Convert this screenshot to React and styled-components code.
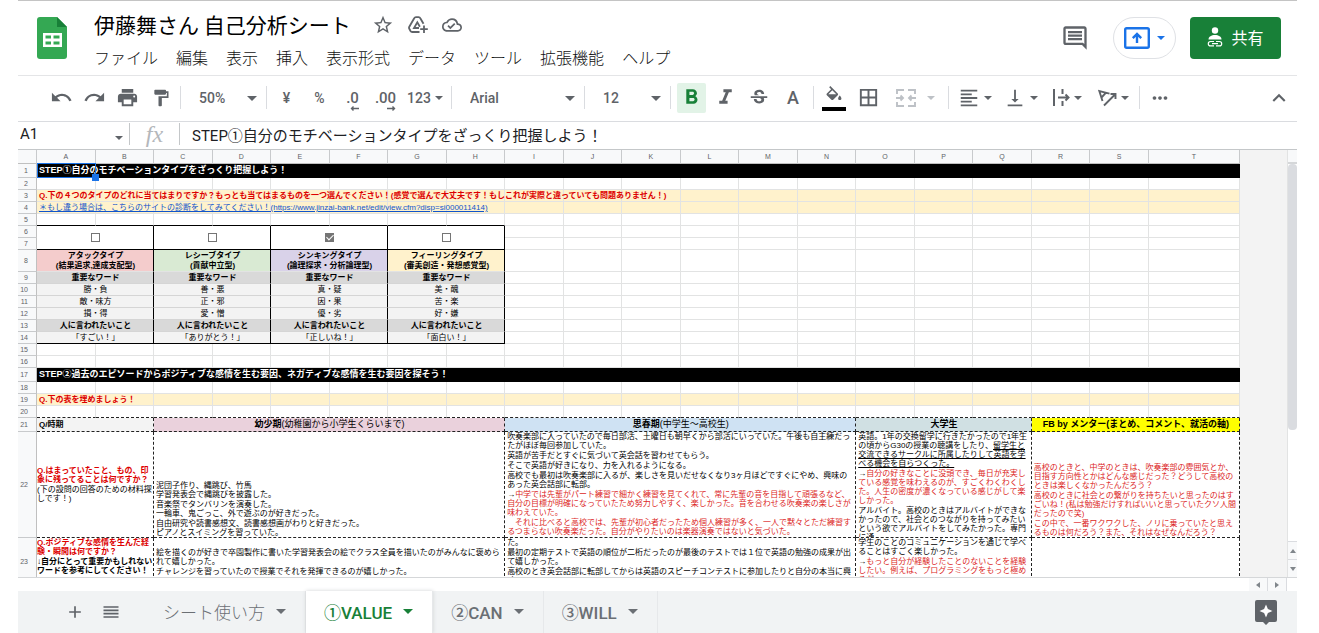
import { useState } from 'react';
import styled, { createGlobalStyle, css } from 'styled-components';
import {
    MdStarBorder,
    MdOutlineCloudDone,
    MdOutlineComment,
    MdUndo,
    MdRedo,
    MdPrint,
    MdFormatPaint,
    MdFormatBold,
    MdFormatItalic,
    MdStrikethroughS,
    MdBorderAll,
    MdFormatAlignLeft,
    MdVerticalAlignBottom,
    MdMoreHoriz,
    MdKeyboardArrowUp,
    MdAdd,
    MdReorder,
} from 'react-icons/md';

const GlobalStyle = createGlobalStyle`
    * {
        box-sizing: border-box;
    }

    body {
        margin: 0;
        background: white;
        color: #202124;
        font-family: Roboto, "Noto Sans CJK JP", sans-serif;
    }

    button, input, select {
        margin: 0;
        padding: 0;
        border: none;
        background: none;
        color: inherit;
        font: inherit;
    }

    p {
        margin: 0;
    }
`;

const Page = styled.main`
    height: 100vh;
    margin: 0 22px 0 18px;
    border-top: 1px solid #c4c4c4;
    display: flex;
    flex-direction: column;
    overflow: hidden;
`;

/* ---------- header ---------- */

const Header = styled.header`
    height: 75px;
    padding: 0 16px 0 19px;
    border-bottom: 1px solid #e4e5e7;
    display: flex;
    flex-shrink: 0;
`;

const Logo = styled.svg`
    width: 30px;
    height: 42px;
    margin-top: 16px;
`;

const TitleArea = styled.div`
    margin-left: 27px;
    padding-top: 8px;
    flex: 1;
`;

const TitleRow = styled.div`
    height: 32px;
    display: flex;
    align-items: center;
    gap: 14px;
    color: #5f6368;
`;

const DocTitle = styled.h1`
    margin: 0 7px 0 0;
    padding-bottom: 2px;
    color: #000;
    font-family: "Noto Sans CJK JP", sans-serif;
    font-size: 21px;
    font-weight: 400;
    line-height: 30px;
    white-space: nowrap;
`;

const IconButton = styled.button`
    display: flex;
    align-items: center;
    justify-content: center;
    color: #5f6368;
`;

const Menu = styled.nav`
    display: flex;
    gap: 18px;
    height: 32px;
`;

const MenuItem = styled.button`
    color: #111;
    font-family: "Noto Sans CJK JP", sans-serif;
    font-size: 16px;
    font-weight: 300;
    line-height: 32px;
    white-space: nowrap;
`;

const HeaderActions = styled.div`
    height: 42px;
    margin-top: 16px;
    display: flex;
    align-items: center;
`;

const PresentButton = styled.button`
    width: 63px;
    height: 42px;
    margin: 0 14px 0 24px;
    border: 1px solid #dfe1e5;
    border-radius: 21px;
    display: flex;
    align-items: center;
    justify-content: center;
    gap: 7px;
    color: #1a73e8;
`;

const ShareButton = styled.button`
    width: 91px;
    height: 42px;
    padding-bottom: 3px;
    border-radius: 4px;
    background: #188038;
    display: flex;
    align-items: center;
    justify-content: center;
    gap: 8px;
    color: white;
    font-size: 16px;
`;

/* ---------- toolbar ---------- */

const Toolbar = styled.div`
    height: 46px;
    padding: 0 2px 2px 27px;
    border-bottom: 1px solid #dadce0;
    display: flex;
    align-items: center;
    flex-shrink: 0;
    color: #5f6368;
    font-size: 14px;
`;

const Tool = styled.button`
    width: ${(props) => (props.$wide ? '46px' : '33px')};
    height: 30px;
    display: flex;
    align-items: center;
    justify-content: center;
    gap: 4px;
    color: ${(props) => (props.$muted ? '#bdc1c6' : '#5f6368')};
    font-weight: 500;
`;

const FormatTool = styled(Tool)`
    width: 34px;
    font-size: 18px;

    span {
        width: 29px;
        height: 30px;
        border-radius: 2px;
        display: flex;
        align-items: center;
        justify-content: center;
    }

    ${(props) =>
        props.$on &&
        css`
            color: #188038;

            span {
                background: #e2f3e7;
            }
        `}
`;

const MergeTool = styled(Tool)`
    width: 60px;
    gap: 11px;
`;

const CollapseTool = styled(Tool)`
    margin-left: auto;
`;

const Separator = styled.div`
    width: 1px;
    height: 23px;
    margin: 0 3px;
    background: #dadce0;
`;

const Picker = styled.label`
    position: relative;
    width: ${(props) => (props.$long ? '126px' : '79px')};
    height: 30px;

    select {
        appearance: none;
        width: 100%;
        height: 30px;
        padding-left: 15px;
        font-weight: 500;
    }

    svg {
        position: absolute;
        right: 6px;
        top: 13px;
        pointer-events: none;
    }
`;

const DecimalLabel = styled.span`
    display: flex;
    flex-direction: column;
    align-items: flex-end;
    padding-top: 6px;
    font-size: 15px;
    line-height: 15px;
`;

/* ---------- formula bar ---------- */

const FormulaBar = styled.div`
    height: 28px;
    padding-bottom: 3px;
    border-bottom: 1px solid #c4c7c9;
    display: flex;
    align-items: center;
    flex-shrink: 0;
`;

const NameBox = styled.input`
    width: 90px;
    padding-left: 2px;
    font-size: 15px;
`;

const NameCaret = styled.button`
    width: 21px;
    height: 24px;
    color: #5f6368;
`;

const Fx = styled.span`
    width: 49px;
    color: #b4b7bb;
    font-family: "Liberation Serif", serif;
    font-size: 24px;
    font-style: italic;
    line-height: 24px;
    text-align: center;
`;

const FormulaDivider = styled.div`
    width: 1px;
    height: 22px;
    background: #c4c7c9;
`;

const FormulaInput = styled.input`
    flex: 1;
    min-width: 0;
    height: 24px;
    padding-left: 12px;
    font-size: 15px;
`;

/* ---------- sheet ---------- */

const SheetArea = styled.div`
    flex: 1;
    min-height: 0;
    display: flex;
    border-bottom: 1px solid #d5d7d9;
    background: #f3f3f3;
`;

const GridView = styled.div`
    flex: 1;
    min-width: 0;
    margin-right: 47px;
    overflow: hidden;
`;

const Grid = styled.table`
    width: 100%;
    table-layout: fixed;
    border-collapse: separate;
    border-spacing: 0;
    background: white;
    color: #000;
    font-family: "Liberation Sans", "Noto Sans CJK JP", sans-serif;
    font-size: 8px;
    line-height: 9px;
`;

const HeadCol = styled.col`
    width: 19px;
`;

const LastCol = styled.col`
    width: 91px;
`;

const Row = styled.tr`
    height: ${(props) => props.$height || 12}px;
`;

const ColumnHead = styled.th`
    height: 14px;
    padding: 0;
    border-right: 1px solid #c8cacc;
    border-bottom: 1px solid #c0c0c0;
    background: #f8f9fa;
    color: #5f6368;
    font-size: 7px;
    font-weight: 400;
`;

const RowHead = styled.th`
    padding: 0 8px 0 0;
    border-right: 1px solid #c0c0c0;
    border-bottom: 1px solid #c8cacc;
    background: #f8f9fa;
    color: #5f6368;
    font-size: 7px;
    font-weight: 400;
    line-height: 8px;
    text-align: right;
`;

const Cell = styled.td`
    position: ${(props) => (props.$selected ? 'relative' : 'static')};
    padding: ${(props) => (props.$snug ? '0' : '0 1px 0 2px')};
    border-right: 1px ${(props) => props.$right || 'solid #e2e3e3'};
    border-bottom: 1px ${(props) => props.$bottom || 'solid #e2e3e3'};
    background: ${(props) => props.$fill || 'white'};
    color: ${(props) => props.$color || '#000'};
    font-size: ${(props) => (props.$large ? '9px' : '8px')};
    font-weight: ${(props) => (props.$bold ? 700 : 400)};
    text-align: ${(props) => (props.$center ? 'center' : 'left')};
    vertical-align: ${(props) => props.$valign || 'middle'};
    white-space: ${(props) => (props.$wrap ? 'normal' : 'nowrap')};
`;

const SelectionBox = styled.div`
    position: absolute;
    inset: -1px -1px -1px 0;
    border: 1px solid #1a73e8;

    &::after {
        content: "";
        position: absolute;
        right: -4px;
        bottom: -4px;
        width: 7px;
        height: 7px;
        background: #1a73e8;
    }
`;

const CellLink = styled.a`
    color: #1155cc;
`;

const TypeName = styled.div`
    line-height: 10px;
`;

const CheckInput = styled.input`
    appearance: none;
    width: 9px;
    height: 9px;
    border: 1px solid #757575;
    display: inline-grid;
    place-content: center;
    vertical-align: middle;

    &:checked {
        background: #757575;
    }

    &:checked::before {
        content: "";
        width: 3px;
        height: 6px;
        margin-bottom: 2px;
        border: solid white;
        border-width: 0 1px 1px 0;
        transform: rotate(45deg);
    }
`;

const Note = styled.div`
    max-height: 105px;
    overflow: hidden;

    p + p {
        margin-top: 1px;
    }
`;

const Red = styled.span`
    color: ${(props) => (props.$bold ? '#dd0000' : '#dc1f26')};
    font-weight: ${(props) => (props.$bold ? 700 : 400)};
`;

/* ---------- scrollbars ---------- */

const VerticalBar = styled.div`
    width: 10px;
    border-left: 1px solid #e2e3e3;
    background: white;
    display: flex;
    flex-direction: column;
`;

const BarCorner = styled.div`
    height: 14px;
    border-bottom: 2px solid #d5d7d9;
    background: #f8f9fa;
`;

const Thumb = styled.div`
    height: 266px;
    border-radius: 4px;
    background: #dadce0;
`;

const ArrowStack = styled.div`
    margin-top: auto;
    display: flex;
    flex-direction: column;
`;

const ArrowButton = styled.button`
    min-width: 9px;
    height: 18px;
    border-top: 1px solid #dadce0;
    background: #f8f9fa;
    display: flex;
    align-items: center;
    justify-content: center;
`;

const HorizontalBar = styled.div`
    height: 13px;
    padding-right: 10px;
    background: white;
    display: flex;
    justify-content: flex-end;
    flex-shrink: 0;

    button {
        width: 19px;
        height: 13px;
        border-top: none;
        border-right: 1px solid #dadce0;
    }
`;

/* ---------- sheet tabs ---------- */

const TabBar = styled.footer`
    height: 42px;
    padding: 0 20px 0 42px;
    background: #f1f3f4;
    display: flex;
    align-items: center;
    flex-shrink: 0;
`;

const TabTool = styled(IconButton)`
    width: 30px;
    margin-right: 6px;
`;

const Tabs = styled.div`
    margin-left: 13px;
    display: flex;
`;

const Tab = styled.button`
    height: 42px;
    padding: 0 19px 2px 18px;
    border-right: 1px solid #e6e8ea;
    background: ${(props) => (props.$active ? 'white' : 'transparent')};
    box-shadow: ${(props) => (props.$active ? '0 0 4px #d0d3d6' : 'none')};
    color: ${(props) => (props.$active ? '#188038' : '#6b6f74')};
    display: flex;
    align-items: center;
    gap: 11px;
    font-size: 17px;
    font-weight: ${(props) => (props.$light ? 300 : 500)};
    white-space: nowrap;
`;

const Explore = styled(IconButton)`
    margin-left: auto;
`;

const Caret = ({ size = 10 }) => (
    <svg width={size} height={size / 2} viewBox="0 0 10 5" aria-hidden="true">
        <path d="M0 0h10L5 5z" fill="currentColor" />
    </svg>
);

const Arrow = ({ turn }) => (
    <svg width="6" height="6" viewBox="0 0 6 6" aria-hidden="true">
        <path d="M0 5h6L3 1z" fill="#80868b" transform={`rotate(${turn} 3 3)`} />
    </svg>
);

const SheetsLogo = () => (
    <Logo viewBox="0 0 30 42" aria-hidden="true">
        <path d="M3 0h17l10 10v29a3 3 0 0 1-3 3H3a3 3 0 0 1-3-3V3a3 3 0 0 1 3-3z" fill="#34a853" />
        <path d="M20 0l10 10H20z" fill="#188038" />
        <path
            d="M6 16h19v14H6zM8.500 18.500v3h5.500v-3zM16.500 18.500v3h6v-3zM8.500 24.500v3h5.500v-3zM16.500 24.500v3h6v-3z"
            fill="white"
            fillRule="evenodd"
        />
    </Logo>
);

const DriveIcon = () => (
    <svg width="20" height="18" viewBox="0 0 20 18" aria-hidden="true">
        <path
            d="M11.500 16H4.200a2 2 0 0 1-1.700-1L1.300 12.800a2 2 0 0 1 0-2L6.200 2.200A2 2 0 0 1 8 1.100h2.600a2 2 0 0 1 1.700 1.100l3.200 5.600M11 12H6l3.300-5.700 2.600 4.500"
            fill="none"
            stroke="currentColor"
            strokeWidth="1.800"
        />
        <path d="M16 9.500v7.500M12.200 13.200h7.600" stroke="currentColor" strokeWidth="1.800" />
    </svg>
);

const PresentIcon = () => (
    <svg width="26" height="22" viewBox="0 0 26 22" aria-hidden="true">
        <rect x="1.200" y="1.200" width="23.600" height="19.600" rx="1.500" fill="none" stroke="currentColor" strokeWidth="2.400" />
        <path d="M13 16V7.500M8.800 11.200L13 7l4.200 4.200" fill="none" stroke="currentColor" strokeWidth="2.400" />
    </svg>
);

const DecimalArrow = ({ back }) => (
    <svg width="9" height="5" viewBox="0 0 9 5" aria-hidden="true">
        <path
            d={back ? 'M9 2.500H1.500M3.500 .5l-2 2 2 2' : 'M0 2.500h7.500M5.500 .5l2 2-2 2'}
            fill="none"
            stroke="currentColor"
            strokeWidth="1.400"
        />
    </svg>
);

const FillIcon = () => (
    <svg width="24" height="26" viewBox="0 0 24 26" aria-hidden="true">
        <g transform="translate(2 1) scale(.83)">
            <path
                d="M16.560 8.940L7.620 0 6.210 1.410l2.380 2.380-5.150 5.150c-.59.59-.59 1.540 0 2.120l5.500 5.500c.29.29.68.44 1.060.44s.77-.15 1.060-.44l5.500-5.500c.59-.58.59-1.530 0-2.120zM5.210 10L10 5.210 14.790 10H5.210zM19 11.500s-2 2.170-2 3.500c0 1.100.9 2 2 2s2-.9 2-2c0-1.330-2-3.500-2-3.500z"
                fill="currentColor"
            />
        </g>
        <path d="M0 22h24v4H0z" fill="#000" />
    </svg>
);

const MergeIcon = () => (
    <svg width="20" height="18" viewBox="0 0 20 18" aria-hidden="true">
        <path
            d="M1 5V1h7M12 1h7v4M1 13v4h7M12 17h7v-4M0 9h7M20 9h-7M4.500 6.500L7 9l-2.500 2.500M15.500 6.500L13 9l2.500 2.500"
            fill="none"
            stroke="currentColor"
            strokeWidth="1.900"
        />
    </svg>
);

const OverflowIcon = () => (
    <svg width="17" height="17" viewBox="0 0 17 17" aria-hidden="true">
        <path
            d="M1 0v17M9.500 0v5M9.500 12v5M5 8.500h10M12.500 5.500l3 3-3 3"
            fill="none"
            stroke="currentColor"
            strokeWidth="2"
        />
    </svg>
);

const RotateIcon = () => (
    <svg width="19" height="18" viewBox="0 0 19 18" aria-hidden="true">
        <path d="M6 16.500L17 5.500M12.500 5h5v5" fill="none" stroke="currentColor" strokeWidth="1.900" />
        <path d="M4.500 12L1.300 2l10.200 2.700M3.500 8.500l4.300-4.700" fill="none" stroke="currentColor" strokeWidth="1.900" />
    </svg>
);

const ShareIcon = () => (
    <svg width="16" height="20" viewBox="0 0 16 20" aria-hidden="true">
        <circle cx="8" cy="3.500" r="3.200" fill="white" />
        <path d="M1.500 12.500c0-3 3-4.500 6.500-4.500s6.500 1.500 6.500 4.500z" fill="white" />
        <path
            d="M7 14.500H3.500a2.200 2.200 0 0 0 0 4.400H7M9 14.500h3.500a2.200 2.200 0 0 1 0 4.400H9M5 16.700h6"
            fill="none"
            stroke="white"
            strokeWidth="1.200"
        />
    </svg>
);

const ExploreIcon = () => (
    <svg width="22" height="25" viewBox="0 0 22 25" aria-hidden="true">
        <path d="M2 0h18a2 2 0 0 1 2 2v18a2 2 0 0 1-2 2h-6l-3 3-3-3H2a2 2 0 0 1-2-2V2a2 2 0 0 1 2-2z" fill="#5f6368" />
        <path d="M11 4.500l1.900 4.600 4.600 1.900-4.600 1.900L11 17.500l-1.900-4.600L4.500 11l4.600-1.900z" fill="white" />
    </svg>
);

const MENUS = ['ファイル', '編集', '表示', '挿入', '表示形式', 'データ', 'ツール', '拡張機能', 'ヘルプ'];
const COLUMNS = 'ABCDEFGHIJKLMNOPQRST'.split('');
const YELLOW = '#fff2cc';
const DASH = 'dashed #222';
const SOLID = 'solid #000';

const TYPES = [
    { name: 'アタックタイプ', detail: '(結果追求,達成支配型)', fill: '#f4cccc', words: ['勝・負', '敵・味方', '損・得'], say: '「すごい！」' },
    { name: 'レシーブタイプ', detail: '(貢献中立型)', fill: '#d9ead3', words: ['善・悪', '正・邪', '愛・憎'], say: '「ありがとう！」' },
    { name: 'シンキングタイプ', detail: '(論理探求・分析論理型)', fill: '#d9d2e9', words: ['真・疑', '因・果', '優・劣'], say: '「正しいね！」' },
    { name: 'フィーリングタイプ', detail: '(審美創造・発想感覚型)', fill: '#fff2cc', words: ['美・醜', '苦・楽', '好・嫌'], say: '「面白い！」' },
];

const TYPE_ROWS = [
    { row: 9, fill: '#d9d9d9', bold: true, text: () => '重要なワード' },
    { row: 10, fill: '#f3f3f3', text: (type) => type.words[0] },
    { row: 11, fill: '#f3f3f3', text: (type) => type.words[1] },
    { row: 12, fill: '#f3f3f3', text: (type) => type.words[2] },
    { row: 13, fill: '#d9d9d9', bold: true, text: () => '人に言われたいこと' },
    { row: 14, fill: '#f3f3f3', text: (type) => type.say },
];

const blanks = (count, props) =>
    Array.from({ length: count }, (_, index) => <Cell key={`blank${index}`} {...props} />);

function PlainRow({ number, bottom, fill, children }) {
    return (
        <Row>
            <RowHead scope="row">{number}</RowHead>
            {children}
            {blanks(children ? 19 : 20, { $bottom: bottom, $fill: fill })}
        </Row>
    );
}

function Sheet() {
    const [checked, setChecked] = useState([false, false, true, false]);

    const toggle = (index) => {
        setChecked(checked.map((value, i) => (i === index ? !value : value)));
    };

    return (
        <Grid>
            <colgroup>
                <HeadCol />
                {COLUMNS.slice(0, 19).map((name) => <col key={name} />)}
                <LastCol />
            </colgroup>
            <thead>
                <tr>
                    <ColumnHead />
                    {COLUMNS.map((name) => <ColumnHead key={name} scope="col">{name}</ColumnHead>)}
                </tr>
            </thead>
            <tbody>
                <Row $height={14}>
                    <RowHead scope="row">1</RowHead>
                    <Cell $selected $fill="#000" $color="white" $bold $large $right={SOLID} $bottom={SOLID}>
                        STEP①自分のモチベーションタイプをざっくり把握しよう！
                        <SelectionBox />
                    </Cell>
                    {blanks(19, { $fill: '#000', $right: SOLID, $bottom: SOLID })}
                </Row>
                <PlainRow number={2} />
                <PlainRow number={3} fill={YELLOW}>
                    <Cell $fill={YELLOW} $color="#dd0000" $bold>
                        Q.下の４つのタイプのどれに当てはまりですか？もっとも当てはまるものを一つ選んでください！(感覚で選んで大丈夫です！もしこれが実際と違っていても問題ありません！)
                    </Cell>
                </PlainRow>
                <PlainRow number={4} fill={YELLOW}>
                    <Cell $fill={YELLOW}>
                        <CellLink href="https://www.jinzai-bank.net/edit/view.cfm?disp=si000011414">
                            ＊もし違う場合は、こちらのサイトの診断をしてみてください！(https://www.jinzai-bank.net/edit/view.cfm?disp=si000011414)
                        </CellLink>
                    </Cell>
                </PlainRow>
                <Row>
                    <RowHead scope="row">5</RowHead>
                    {blanks(8, { $bottom: SOLID })}
                    {COLUMNS.slice(8).map((name) => <Cell key={name} />)}
                </Row>

                <Row>
                    <RowHead scope="row">6</RowHead>
                    {TYPES.map((type, index) => (
                        <Cell key={type.name} colSpan={2} rowSpan={2} $center $right={SOLID} $bottom={SOLID}>
                            <CheckInput
                                type="checkbox"
                                aria-label={type.name}
                                checked={checked[index]}
                                onChange={() => toggle(index)}
                            />
                        </Cell>
                    ))}
                    {blanks(12)}
                </Row>
                <Row>
                    <RowHead scope="row">7</RowHead>
                    {blanks(12)}
                </Row>
                <Row $height={22}>
                    <RowHead scope="row">8</RowHead>
                    {TYPES.map((type) => (
                        <Cell key={type.name} colSpan={2} $fill={type.fill} $bold $center $right={SOLID}>
                            <TypeName>{type.name}</TypeName>
                            <TypeName>{type.detail}</TypeName>
                        </Cell>
                    ))}
                    {blanks(12)}
                </Row>
                {TYPE_ROWS.map((line) => (
                    <Row key={line.row}>
                        <RowHead scope="row">{line.row}</RowHead>
                        {TYPES.map((type) => (
                            <Cell
                                key={type.name}
                                colSpan={2}
                                $fill={line.fill}
                                $bold={line.bold}
                                $center
                                $right={SOLID}
                                $bottom={line.row === 14 ? SOLID : 'solid #d5d5d5'}
                            >
                                {line.text(type)}
                            </Cell>
                        ))}
                        {blanks(12)}
                    </Row>
                ))}
                <PlainRow number={15} />
                <PlainRow number={16} />

                <Row $height={14}>
                    <RowHead scope="row">17</RowHead>
                    <Cell $fill="#000" $color="white" $bold $large $right={SOLID} $bottom={SOLID}>
                        STEP②過去のエピソードからポジティブな感情を生む要因、ネガティブな感情を生む要因を探そう！
                    </Cell>
                    {blanks(19, { $fill: '#000', $right: SOLID, $bottom: SOLID })}
                </Row>
                <PlainRow number={18} />
                <PlainRow number={19} fill={YELLOW}>
                    <Cell $fill={YELLOW} $color="#dd0000" $bold>Q.下の表を埋めましょう！</Cell>
                </PlainRow>
                <PlainRow number={20} bottom={DASH} />

                <Row $height={14}>
                    <RowHead scope="row">21</RowHead>
                    <Cell colSpan={2} $fill="#f3f3f3" $bold $right={DASH} $bottom={DASH}>Q/時期</Cell>
                    <Cell colSpan={6} $fill="#ead1dc" $large $center $right={DASH} $bottom={DASH}>
                        <b>幼少期</b>(幼稚園から小学生くらいまで)
                    </Cell>
                    <Cell colSpan={6} $fill="#cfe2f3" $large $center $right={DASH} $bottom={DASH}>
                        <b>思春期</b>(中学生～高校生)
                    </Cell>
                    <Cell colSpan={3} $fill="#d0e0e3" $large $bold $center $right={DASH} $bottom={DASH}>大学生</Cell>
                    <Cell colSpan={3} $fill="#ffff00" $large $bold $center $right={DASH} $bottom={DASH}>
                        FB by メンター(まとめ、コメント、就活の軸)
                    </Cell>
                </Row>

                <Row $height={106}>
                    <RowHead scope="row">22</RowHead>
                    <Cell colSpan={2} $wrap $snug $right={DASH} $bottom={DASH}>
                        <Note>
                            <p><Red $bold>Q.はまっていたこと、もの、印象に残ってることは何ですか？</Red></p>
                            <p>(下の設問の回答のための材料探しです！)</p>
                        </Note>
                    </Cell>
                    <Cell colSpan={6} $wrap $valign="bottom" $right={DASH} $bottom={DASH}>
                        <Note>
                            <p>泥団子作り、縄跳び、竹馬<br />学習発表会で縄跳びを披露した。</p>
                            <p>音楽祭でタンバリンを演奏した。<br />一輪車、鬼ごっこ、外で遊ぶのが好きだった。</p>
                            <p>自由研究や読書感想文、読書感想画がわりと好きだった。<br />ピアノとスイミングを習っていた。</p>
                        </Note>
                    </Cell>
                    <Cell colSpan={6} $wrap $valign="top" $right={DASH} $bottom={DASH}>
                        <Note>
                            <p>吹奏楽部に入っていたので毎日部活、土曜日も朝早くから部活にいっていた。午後も自主練だったがほぼ毎回参加していた。</p>
                            <p>英語が苦手だとすぐに気づいて英会話を習わせてもらう。</p>
                            <p>そこで英語が好きになり、力を入れるようになる。</p>
                            <p>高校でも最初は吹奏楽部に入るが、楽しさを見いだせなくなり3ヶ月ほどですぐにやめ、興味のあった英会話部に転部。</p>
                            <p>→<Red>中学では先輩がパート練習で細かく練習を見てくれて、常に先輩の音を目指して頑張るなど、自分の目標が明確になっていたため努力しやすく、楽しかった。音を合わせる吹奏楽の楽しさが味わえていた。</Red></p>
                            <p><Red>　それに比べると高校では、先輩が初心者だったため個人練習が多く、一人で黙々とただ練習するつまらない吹奏楽だった。自分がやりたいのは楽器演奏ではないと気づいた。</Red></p>
                        </Note>
                    </Cell>
                    <Cell colSpan={3} $wrap $valign="top" $right={DASH} $bottom={DASH}>
                        <Note>
                            <p>英語。1年の交換留学に行きたかったので1年生の頃からG30の授業の聴講をしたり、<u>留学生と交流できるサークルに所属したりして英語を学べる機会を自らつくった。</u></p>
                            <p>→<Red>自分の好きなことに没頭でき、毎日が充実している感覚を味わえるのが、すごくわくわくした。人生の密度が濃くなっている感じがして楽しかった。</Red></p>
                            <p>アルバイト。高校のときはアルバイトができなかったので、社会とのつながりを持ってみたいという欲でアルバイトをしてみたかった。専門に通</p>
                        </Note>
                    </Cell>
                    <Cell colSpan={3} $wrap $valign="bottom" $right={DASH} $bottom={DASH}>
                        <Note>
                            <p><Red>高校のときと、中学のときは、吹奏楽部の雰囲気とか、目指す方向性とかはどんな感じだった？どうして高校のときは楽しくなかったんだろう？</Red></p>
                            <p><Red>高校のときに社会との繋がりを持ちたいと思ったのはすごいね！(私は勉強だけすればいいと思っていたクソ人間だったので笑)</Red></p>
                            <p><Red>この中で、一番ワクワクした、ノリに乗っていたと思えるものは何だろう？また、それはなぜなんだろう？</Red></p>
                        </Note>
                    </Cell>
                </Row>

                <Row $height={40}>
                    <RowHead scope="row">23</RowHead>
                    <Cell colSpan={2} $wrap $snug $valign="top" $right={DASH}>
                        <Note>
                            <p><Red $bold>Q.ポジティブな感情を生んだ経験・瞬間は何ですか？</Red></p>
                            <p><b>↓自分にとって重要かもしれないワードを参考にしてください！</b></p>
                        </Note>
                    </Cell>
                    <Cell colSpan={6} $wrap $right={DASH}>
                        <Note>
                            <p>絵を描くのが好きで卒園製作に書いた学習発表会の絵でクラス全員を描いたのがみんなに褒められて嬉しかった。</p>
                            <p>チャレンジを習っていたので授業でそれを発揮できるのが嬉しかった。</p>
                        </Note>
                    </Cell>
                    <Cell colSpan={6} $wrap $valign="top" $right={DASH}>
                        <Note>
                            <p>た。</p>
                            <p>最初の定期テストで英語の順位が二桁だったのが最後のテストでは１位で英語の勉強の成果が出て嬉しかった。</p>
                            <p>高校のとき英会話部に転部してからは英語のスピーチコンテストに参加したりと自分の本当に興味</p>
                        </Note>
                    </Cell>
                    <Cell colSpan={3} $wrap $valign="top" $right={DASH}>
                        <Note>
                            <p>学生のことのコミュニケーションを通じて学べることはすごく楽しかった。</p>
                            <p>→<Red>もっと自分が経験したことのないことを経験したい。例えば、プログラミングをもっと極めるだ</Red></p>
                        </Note>
                    </Cell>
                    <Cell colSpan={3} $right={DASH} />
                </Row>
            </tbody>
        </Grid>
    );
}

function App() {
    const [formula, setFormula] = useState('STEP①自分のモチベーションタイプをざっくり把握しよう！');
    const [cellName, setCellName] = useState('A1');

    return (
        <>
            <GlobalStyle />
            <Page>
                <Header>
                    <SheetsLogo />
                    <TitleArea>
                        <TitleRow>
                            <DocTitle>伊藤舞さん 自己分析シート</DocTitle>
                            <IconButton aria-label="スターを付ける"><MdStarBorder size={22} /></IconButton>
                            <IconButton aria-label="移動"><DriveIcon /></IconButton>
                            <IconButton aria-label="保存状況"><MdOutlineCloudDone size={20} /></IconButton>
                        </TitleRow>
                        <Menu>
                            {MENUS.map((name) => <MenuItem key={name}>{name}</MenuItem>)}
                        </Menu>
                    </TitleArea>
                    <HeaderActions>
                        <IconButton aria-label="コメント"><MdOutlineComment size={28} /></IconButton>
                        <PresentButton aria-label="プレゼンテーション">
                            <PresentIcon />
                            <Caret size={8} />
                        </PresentButton>
                        <ShareButton><ShareIcon />共有</ShareButton>
                    </HeaderActions>
                </Header>

                <Toolbar>
                    <Tool aria-label="元に戻す"><MdUndo size={23} /></Tool>
                    <Tool aria-label="やり直し"><MdRedo size={23} /></Tool>
                    <Tool aria-label="印刷"><MdPrint size={23} /></Tool>
                    <Tool aria-label="書式を貼り付け"><MdFormatPaint size={20} /></Tool>
                    <Separator />
                    <Picker>
                        <select aria-label="ズーム" defaultValue="50%"><option>50%</option></select>
                        <Caret />
                    </Picker>
                    <Separator />
                    <Tool>¥</Tool>
                    <Tool>%</Tool>
                    <Tool><DecimalLabel>.0<DecimalArrow back /></DecimalLabel></Tool>
                    <Tool><DecimalLabel>.00<DecimalArrow /></DecimalLabel></Tool>
                    <Tool $wide>123<Caret size={8} /></Tool>
                    <Separator />
                    <Picker $long>
                        <select aria-label="フォント" defaultValue="Arial"><option>Arial</option></select>
                        <Caret />
                    </Picker>
                    <Separator />
                    <Picker>
                        <select aria-label="フォントサイズ" defaultValue="12"><option>12</option></select>
                        <Caret />
                    </Picker>
                    <Separator />
                    <FormatTool $on aria-label="太字"><span><MdFormatBold size={25} /></span></FormatTool>
                    <FormatTool aria-label="斜体"><MdFormatItalic size={25} /></FormatTool>
                    <FormatTool aria-label="取り消し線"><MdStrikethroughS size={22} /></FormatTool>
                    <FormatTool>A</FormatTool>
                    <Separator />
                    <FormatTool aria-label="塗りつぶしの色"><FillIcon /></FormatTool>
                    <FormatTool aria-label="枠線"><MdBorderAll size={23} /></FormatTool>
                    <MergeTool $muted aria-label="セルを結合"><MergeIcon /><Caret size={8} /></MergeTool>
                    <Separator />
                    <Tool $wide aria-label="水平方向の配置"><MdFormatAlignLeft size={22} /><Caret size={8} /></Tool>
                    <Tool $wide aria-label="垂直方向の配置"><MdVerticalAlignBottom size={22} /><Caret size={8} /></Tool>
                    <Tool $wide aria-label="テキストを折り返す"><OverflowIcon /><Caret size={8} /></Tool>
                    <Tool $wide aria-label="テキストの回転"><RotateIcon /><Caret size={8} /></Tool>
                    <Separator />
                    <Tool aria-label="その他"><MdMoreHoriz size={22} /></Tool>
                    <CollapseTool aria-label="メニューを非表示"><MdKeyboardArrowUp size={26} /></CollapseTool>
                </Toolbar>

                <FormulaBar>
                    <NameBox
                        aria-label="名前ボックス"
                        value={cellName}
                        onChange={(e) => setCellName(e.target.value)}
                    />
                    <NameCaret aria-label="名前付き範囲"><Caret size={8} /></NameCaret>
                    <FormulaDivider />
                    <Fx>fx</Fx>
                    <FormulaDivider />
                    <FormulaInput
                        aria-label="数式バー"
                        value={formula}
                        onChange={(e) => setFormula(e.target.value)}
                    />
                </FormulaBar>

                <SheetArea>
                    <GridView><Sheet /></GridView>
                    <VerticalBar>
                        <BarCorner />
                        <Thumb />
                        <ArrowStack>
                            <ArrowButton aria-label="上へ"><Arrow turn={0} /></ArrowButton>
                            <ArrowButton aria-label="下へ"><Arrow turn={180} /></ArrowButton>
                        </ArrowStack>
                    </VerticalBar>
                </SheetArea>
                <HorizontalBar>
                    <ArrowButton aria-label="左へ"><Arrow turn={-90} /></ArrowButton>
                    <ArrowButton aria-label="右へ"><Arrow turn={90} /></ArrowButton>
                </HorizontalBar>

                <TabBar>
                    <TabTool aria-label="シートを追加"><MdAdd size={20} /></TabTool>
                    <TabTool aria-label="すべてのシート"><MdReorder size={20} /></TabTool>
                    <Tabs>
                        <Tab $light>シート使い方<Caret /></Tab>
                        <Tab $active>①VALUE<Caret /></Tab>
                        <Tab>②CAN<Caret /></Tab>
                        <Tab>③WILL<Caret /></Tab>
                    </Tabs>
                    <Explore aria-label="データ探索"><ExploreIcon /></Explore>
                </TabBar>
            </Page>
        </>
    );
}

export default App;
